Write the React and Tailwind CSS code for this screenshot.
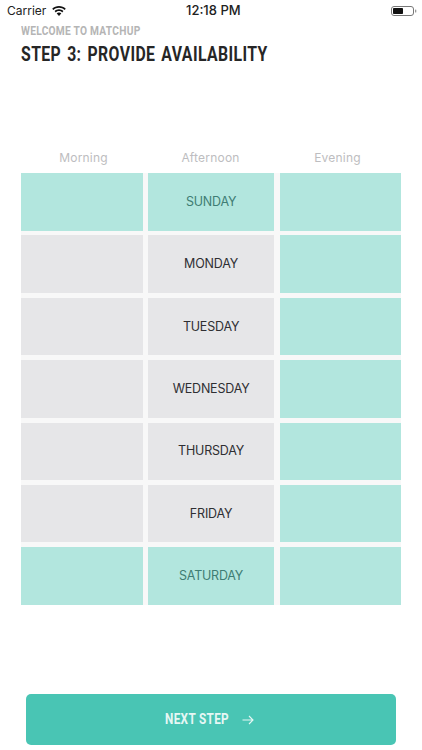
const days = [
  { name: "SUNDAY", morning: true, afternoon: true, evening: true },
  { name: "MONDAY", morning: false, afternoon: false, evening: true },
  { name: "TUESDAY", morning: false, afternoon: false, evening: true },
  { name: "WEDNESDAY", morning: false, afternoon: false, evening: true },
  { name: "THURSDAY", morning: false, afternoon: false, evening: true },
  { name: "FRIDAY", morning: false, afternoon: false, evening: true },
  { name: "SATURDAY", morning: true, afternoon: true, evening: true },
];

function Cell({ on, label }) {
  return (
    <div
      className={
        "flex items-center justify-center pt-px text-[12.500px] tracking-[-0.2px] " +
        (on ? "bg-[#b2e6de] text-[#3f7d74]" : "bg-[#e6e6e8] text-[#2f2f33]")
      }
    >
      {label}
    </div>
  );
}

function StatusBar() {
  return (
    <div className="relative flex h-[22px] items-center justify-between pl-[7px] pr-[5px] text-[#222] text-[13px] font-['Inter',sans-serif]">
      <div className="flex items-center gap-[6px]">
        <span className="text-[12px]">Carrier</span>
        <svg className="mb-[1px]" width="14" height="10" viewBox="0 0 14 10" fill="#111">
          <path d="M7 0C4.400 0 2 1 .2 2.700l1.200 1.300C2.900 2.600 4.900 1.800 7 1.800s4.100.8 5.600 2.200l1.200-1.300C12 1 9.600 0 7 0z" />
          <path d="M7 3.300c-1.700 0-3.300.7-4.400 1.800l1.200 1.300C4.600 5.600 5.800 5.100 7 5.100s2.400.5 3.200 1.300l1.200-1.300C10.300 4 8.700 3.300 7 3.300z" />
          <path d="M7 6.500c-.9 0-1.700.3-2.300 1L7 10l2.300-2.500c-.6-.7-1.400-1-2.300-1z" />
        </svg>
      </div>
      <span className="absolute left-[186px] font-medium">12:18 PM</span>
      <svg width="26" height="10" viewBox="0 0 26 10">
        <rect x="0.500" y="0.500" width="22" height="9" rx="2.500" fill="none" stroke="#777" />
        <rect x="2" y="2" width="10" height="6" rx="0.800" fill="#111" />
        <rect x="24" y="3.500" width="1.300" height="3" rx="0.600" fill="#999" />
      </svg>
    </div>
  );
}

export default function App() {
  return (
    <div className="flex h-[750px] w-[422px] flex-col overflow-hidden bg-white font-['Inter',sans-serif]">
      <StatusBar />
      <div className="mt-[2px] px-[21px] font-['Roboto',sans-serif] font-bold whitespace-nowrap">
        <div className="origin-left scale-x-[0.85] text-[12px] leading-[15px] tracking-[0.3px] text-[#b5b5b5]">
          WELCOME TO MATCHUP
        </div>
        <div className="mt-[5px] origin-left scale-x-[0.81] text-[19.500px] leading-[22px] tracking-[0.5px] [word-spacing:2px] text-[#262626]">
          STEP 3: PROVIDE AVAILABILITY
        </div>
      </div>

      <div className="mt-[84px] grid grid-cols-3 pl-[20px] pr-[21px] text-center text-[12px] leading-[16px] tracking-[0.2px] text-[#bdbdc0]">
        <div>Morning</div>
        <div>Afternoon</div>
        <div>Evening</div>
      </div>

      <div className="mx-[21px] mt-[7px] grid grid-cols-[121.500px_126.500px_121.500px] auto-rows-[57.500px] gap-x-[5.300px] gap-y-[4.900px] bg-[#f8f8f8]">
        {days.map((d) => (
          <div key={d.name} className="contents">
            <Cell on={d.morning} />
            <Cell on={d.afternoon} label={d.name} />
            <Cell on={d.evening} />
          </div>
        ))}
      </div>

      <button
        type="button"
        className="mx-[26px] mt-auto mb-[5px] flex h-[51px] items-center justify-center rounded-[5px] bg-[#49c5b4] font-['Roboto',sans-serif] text-[14px] font-bold tracking-[0.4px] text-[#e6f7f4]"
      >
        <span className="ml-[-3px] w-[64px] origin-left scale-x-[0.84] whitespace-nowrap text-left">NEXT STEP</span>
        <svg className="ml-[13px]" width="12" height="10" viewBox="0 0 12 10" fill="none" stroke="#e6f7f4" strokeWidth="1.100">
          <path d="M.5 5h10.500M7 1l4 4-4 4" />
        </svg>
      </button>
    </div>
  );
}
